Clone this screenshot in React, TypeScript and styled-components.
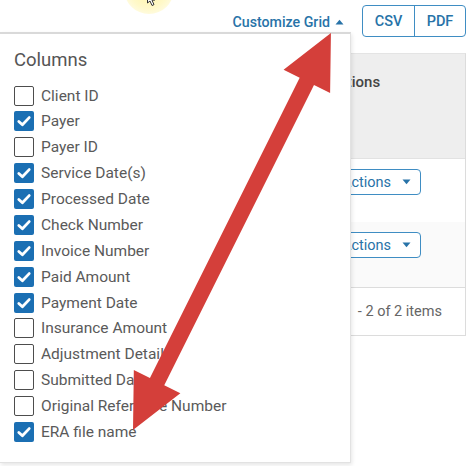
import React from 'react';
import styled, { createGlobalStyle } from 'styled-components';

const Global = createGlobalStyle`
  *, *::before, *::after { box-sizing: border-box; }
  html, body { margin: 0; padding: 0; background: #fff; }
  body {
    font-family: Roboto, "Liberation Sans", Arial, sans-serif;
    width: 471px;
    height: 466px;
    overflow: hidden;
  }
`;

const BLUE = '#2873a8';
const BORDER_BLUE = '#3f8dc3';

const Page = styled.div`
  position: relative;
  width: 471px;
  height: 466px;
  overflow: hidden;
  background: #fff;
`;

const TopBar = styled.div`
  display: flex;
  justify-content: flex-end;
  align-items: center;
  gap: 18px;
  height: 37px;
  padding: 5px 5px 0 0;
`;

const CustomizeLink = styled.div`
  display: flex;
  align-items: center;
  gap: 5px;
  color: ${BLUE};
  font-size: 14.2px;
  font-weight: 500;
  line-height: 18px;
  margin-top: 1px;
`;

const ButtonGroup = styled.div`
  display: flex;
  height: 32px;
  border: 1.5px solid ${BORDER_BLUE};
  border-radius: 4px;
  overflow: hidden;
`;

const GroupButton = styled.div<{ $divider?: boolean }>`
  width: 51px;
  display: flex;
  align-items: center;
  justify-content: center;
  color: ${BLUE};
  font-size: 14.5px;
  font-weight: 500;
  border-left: ${(p) => (p.$divider ? `1.5px solid ${BORDER_BLUE}` : 'none')};
`;

const Grid = styled.div`
  margin: 16px 5px 0 0;
  border: 1px solid #dcdcdc;
  border-top-color: #e4e4e4;
`;

const HeaderRow = styled.div`
  display: flex;
  justify-content: flex-end;
  height: 105px;
  background: #eeeeee;
  border-bottom: 1px solid #e2e2e2;
`;

const Cell = styled.div<{ $w: number; $pl: number; $pt: number }>`
  width: ${(p) => p.$w}px;
  padding: ${(p) => p.$pt}px 0 0 ${(p) => p.$pl}px;
`;

const HeaderText = styled.div`
  font-size: 15px;
  font-weight: 500;
  line-height: 16px;
  color: #454545;
`;

const BodyRow = styled.div<{ $h: number; $alt?: boolean }>`
  display: flex;
  justify-content: flex-end;
  height: ${(p) => p.$h}px;
  background: ${(p) => (p.$alt ? '#fafafa' : '#fff')};
`;

const ActionsButton = styled.div`
  display: flex;
  align-items: center;
  width: 89px;
  height: 26px;
  padding: 0 0 0 9px;
  gap: 11px;
  border: 1.5px solid ${BORDER_BLUE};
  border-radius: 4px;
  color: ${BLUE};
  font-size: 14.5px;
  background: #fff;
`;

const Footer = styled.div`
  display: flex;
  justify-content: flex-end;
  align-items: center;
  height: 48px;
  border-top: 1px solid #dcdcdc;
  padding-right: 23px;
  color: #666;
  font-size: 14.5px;
`;

const Panel = styled.div`
  position: absolute;
  top: 32px;
  left: 0;
  width: 351px;
  height: 431px;
  background: #fff;
  border-top: 2px solid #d9d9d9;
  border-right: 1px solid #e2e2e2;
  border-bottom: 1px solid #e2e2e2;
  box-shadow: 1px 2px 4px rgba(0, 0, 0, 0.1);
  padding: 15px 0 0 14px;
`;

const PanelTitle = styled.div`
  font-size: 18.5px;
  line-height: 22px;
  color: #555;
  margin-bottom: 11.6px;
`;

const OptionList = styled.div`
  display: flex;
  flex-direction: column;
`;

const Option = styled.div`
  display: flex;
  align-items: center;
  gap: 7px;
  height: 25.88px;
  font-size: 15.5px;
  color: #5a5a5a;
  white-space: nowrap;
`;

const Box = styled.div<{ $checked: boolean }>`
  width: 20px;
  height: 20px;
  flex: none;
  border-radius: 2px;
  display: flex;
  align-items: center;
  justify-content: center;
  background: ${(p) => (p.$checked ? '#1b6fb3' : '#fff')};
  border: ${(p) => (p.$checked ? 'none' : '1.5px solid #4d4d4d')};
`;

const Overlay = styled.svg`
  position: absolute;
  left: 0;
  top: 0;
  pointer-events: none;
`;

const Highlight = styled.div`
  position: absolute;
  left: 124px;
  top: -36px;
  width: 50px;
  height: 50px;
  border-radius: 50%;
  background: radial-gradient(circle, rgba(255, 243, 150, 0.9) 0%, rgba(255, 246, 180, 0.7) 55%, rgba(255, 250, 220, 0) 100%);
  pointer-events: none;
`;

const columns: [string, boolean][] = [
  ['Client ID', false],
  ['Payer', true],
  ['Payer ID', false],
  ['Service Date(s)', true],
  ['Processed Date', true],
  ['Check Number', true],
  ['Invoice Number', true],
  ['Paid Amount', true],
  ['Payment Date', true],
  ['Insurance Amount', false],
  ['Adjustment Detail', false],
  ['Submitted Date', false],
  ['Original Reference Number', false],
  ['ERA file name', true],
];

const CaretUp = () => (
  <svg width="9" height="6" viewBox="0 0 9 6">
    <path d="M0.5 5.5 L4.5 0.8 L8.5 5.5 Z" fill={BLUE} />
  </svg>
);

const CaretDown = () => (
  <svg width="9" height="6" viewBox="0 0 9 6">
    <path d="M0.5 0.5 L4.5 5.2 L8.5 0.5 Z" fill={BLUE} />
  </svg>
);

const Check = () => (
  <svg width="20" height="20" viewBox="0 0 20 20">
    <path d="M4.8 10.4 L8.4 13.8 L15.2 6.6" fill="none" stroke="#fff" strokeWidth="2.8" strokeLinecap="round" strokeLinejoin="round" />
  </svg>
);

export default function App() {
  return (
    <Page>
      <Global />
      <TopBar>
        <CustomizeLink>
          Customize Grid
          <CaretUp />
        </CustomizeLink>
        <ButtonGroup>
          <GroupButton>CSV</GroupButton>
          <GroupButton $divider>PDF</GroupButton>
        </ButtonGroup>
      </TopBar>

      <Grid>
        <HeaderRow>
          <Cell $w={144} $pl={8} $pt={20}>
            <HeaderText>Actions</HeaderText>
          </Cell>
        </HeaderRow>
        <BodyRow $h={63}>
          <Cell $w={139} $pl={6} $pt={10}>
            <ActionsButton>
              Actions
              <CaretDown />
            </ActionsButton>
          </Cell>
        </BodyRow>
        <BodyRow $h={65} $alt>
          <Cell $w={139} $pl={6} $pt={10}>
            <ActionsButton>
              Actions
              <CaretDown />
            </ActionsButton>
          </Cell>
        </BodyRow>
        <Footer>- 2 of 2 items</Footer>
      </Grid>

      <Panel>
        <PanelTitle>Columns</PanelTitle>
        <OptionList>
          {columns.map(([label, checked]) => (
            <Option key={label}>
              <Box $checked={checked}>{checked && <Check />}</Box>
              {label}
            </Option>
          ))}
        </OptionList>
      </Panel>

      <Highlight />
      <Overlay width="471" height="466" viewBox="0 0 471 466">
        <path d="M147.5 -6 L147.5 3 L150 1 L152 5.5 L154 4.6 L152 0.3 L155 0 Z" fill="#fff" stroke="#333" strokeWidth="1" />
        <g transform="translate(133 430) rotate(-63.5)">
          <polygon
            points="0,0 54,-26 54,-8 389.6,-8 389.6,-26 443.6,0 389.6,26 389.6,8 54,8 54,26"
            fill="#d43f3a"
          />
        </g>
      </Overlay>
    </Page>
  );
}
